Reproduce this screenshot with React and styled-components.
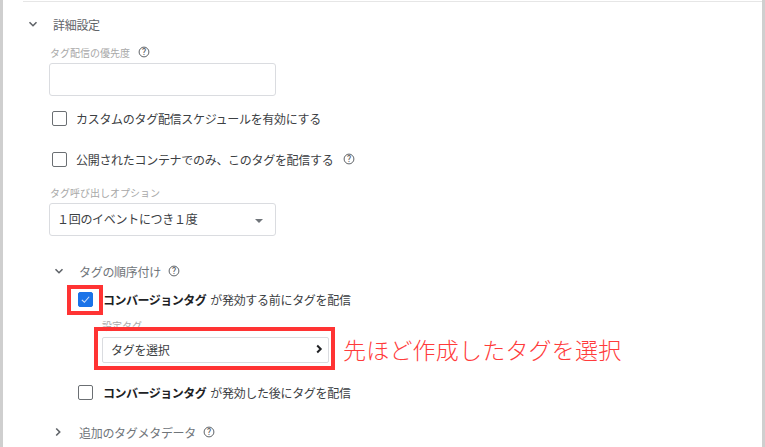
import React from "react";
import styled, { createGlobalStyle } from "styled-components";

const Global = createGlobalStyle`
  html, body { margin: 0; padding: 0; background: #fff; }
  body { font-family: Roboto, "Noto Sans CJK JP", "Noto Sans", sans-serif; overflow: hidden; }
`;
const Page = styled.div`
  position: relative; box-sizing: border-box; width: 765px; height: 447px; overflow: hidden;
  border-left: 3px solid #cfcfcf; border-right: 3px solid #cfcfcf; background: #fff;
`;
const Rule = styled.div`height: 1px; margin: 1px 0 0 20px; background: #e6e6e6;`;
const Section = styled.div`
  display: flex; align-items: center; height: 18px; letter-spacing: -0.3px;
  margin: ${p => p.$top}px 0 0 ${p => p.$left}px;
  font-size: 12px; color: ${p => p.$color};
`;
const Chevron = styled.svg`width: 10px; height: 10px; flex: none; fill: none; stroke: ${p => p.$color || "#5f6368"}; stroke-width: ${p => p.$weight || 1.6};`;
const ChevronSlot = styled.span`display: flex; flex: none; width: ${p => p.$w}px;`;
const FieldLabel = styled.div`
  display: flex; align-items: center; gap: 8px; height: 14px;
  margin: ${p => p.$top}px 0 0 ${p => p.$left}px;
  font-size: 10px; color: #a8a8a8;
`;
const Box = styled.div`
  box-sizing: border-box; display: flex; align-items: center; justify-content: space-between;
  width: 227px; height: 33px; margin: ${p => p.$top}px 0 0 46px; padding: 0 12px 3px 7px;
  border: 1px solid #dadce0; border-radius: 3px; font-size: 12px; letter-spacing: -0.3px; color: #3c4043;
`;
const Caret = styled.span`
  width: 0; height: 0; border-left: 4px solid transparent; border-right: 4px solid transparent;
  border-top: 4px solid #70757a; margin-top: 5px;
`;
const CheckRow = styled.div`
  display: flex; align-items: center; height: 18px; font-size: 12px; letter-spacing: -0.3px; color: #3c4043;
  margin: ${p => p.$top}px 0 0 ${p => p.$left}px; gap: ${p => p.$gap || 9}px; white-space: nowrap;
`;
const Check = styled.span`
  box-sizing: border-box; display: flex; align-items: center; justify-content: center;
  flex: none; width: 15px; height: 15px; border-radius: 2px;
  border: 1px solid ${p => (p.$on ? "#1a73e8" : "#6b6f73")};
  background: ${p => (p.$on ? "#1a73e8" : "#fff")};
`;
const Tick = styled.svg`width: 11px; height: 11px; fill: none; stroke: #cfe0fb; stroke-width: 1.2;`;
const Strong = styled.b`font-weight: 700; color: #202124; margin-right: 4px; letter-spacing: -0.5px;`;
const Picker = styled.div`
  box-sizing: border-box; display: flex; align-items: center; justify-content: space-between;
  width: 227px; height: 26px; margin: 5px 0 0 99px; padding: 0 4px 2px 8px;
  border: 1px solid #dadce0; border-radius: 2px; font-size: 12px; letter-spacing: -0.3px; color: #3c4043; background: #fff;
`;
const Help = styled.svg`width: 12px; height: 12px; flex: none; fill: none; stroke: #5f6368; margin-left: ${p => p.$gap || 0}px;`;
const HelpText = styled.text`font-size: 8.5px; font-weight: 500; fill: #5f6368; stroke: none; text-anchor: middle; font-family: Roboto, sans-serif;`;
const Mark = styled.div`
  position: absolute; box-sizing: border-box; border: 4px solid #ff3333;
  left: ${p => p.$x}px; top: ${p => p.$y}px; width: ${p => p.$w}px; height: ${p => p.$h}px;
`;
const Caption = styled.div`
  position: absolute; left: 340px; top: 336px; font-size: 23px; letter-spacing: 0.2px; font-weight: 300;
  line-height: 32px; color: #ff3b3b; white-space: nowrap;
`;

const HelpIcon = ({ gap }) => (
  <Help viewBox="0 0 12 12" $gap={gap}><circle cx="6" cy="6" r="4.9" /><HelpText x="6" y="9">?</HelpText></Help>
);
const Down = ({ color }) => <Chevron viewBox="0 0 10 10" $color={color}><path d="M1.5 3.2 5 6.7l3.5-3.5" /></Chevron>;
const Right = ({ color, weight }) => <Chevron viewBox="0 0 10 10" $color={color} $weight={weight}><path d="M3.2 1.5 6.7 5 3.2 8.5" /></Chevron>;

export default function App() {
  return (
    <Page>
      <Global />
      <Rule />
      <Section $top={13} $left={25} $color="#5f6368"><ChevronSlot $w={25}><Down /></ChevronSlot>詳細設定</Section>
      <FieldLabel $top={12} $left={47}>タグ配信の優先度<HelpIcon /></FieldLabel>
      <Box $top={4} />
      <CheckRow $top={13} $left={49}><Check />カスタムのタグ配信スケジュールを有効にする</CheckRow>
      <CheckRow $top={23} $left={49}><Check />公開されたコンテナでのみ、このタグを配信する<HelpIcon gap={1} /></CheckRow>
      <FieldLabel $top={17} $left={47}>タグ呼び出しオプション</FieldLabel>
      <Box $top={4}>１回のイベントにつき１度<Caret /></Box>
      <Section $top={26} $left={51} $color="#70757a"><ChevronSlot $w={25}><Down /></ChevronSlot>タグの順序付け<HelpIcon gap={7} /></Section>
      <CheckRow $top={10} $left={75} $gap={10}>
        <Check $on><Tick viewBox="0 0 12 12"><path d="M2 6.3 4.8 9 10 3" /></Tick></Check>
        <span><Strong>コンバージョンタグ</Strong>が発効する前にタグを配信</span>
      </CheckRow>
      <FieldLabel $top={10} $left={99}>設定タグ</FieldLabel>
      <Picker>タグを選択<Right color="#202124" weight={2} /></Picker>
      <CheckRow $top={20} $left={75} $gap={10}>
        <Check />
        <span><Strong>コンバージョンタグ</Strong>が発効した後にタグを配信</span>
      </CheckRow>
      <Section $top={22} $left={50} $color="#70757a"><ChevronSlot $w={26}><Right /></ChevronSlot>追加のタグメタデータ<HelpIcon gap={7} /></Section>
      <Mark $x={64} $y={285} $w={36} $h={30} />
      <Mark $x={91} $y={327} $w={241} $h={43} />
      <Caption>先ほど作成したタグを選択</Caption>
    </Page>
  );
}
